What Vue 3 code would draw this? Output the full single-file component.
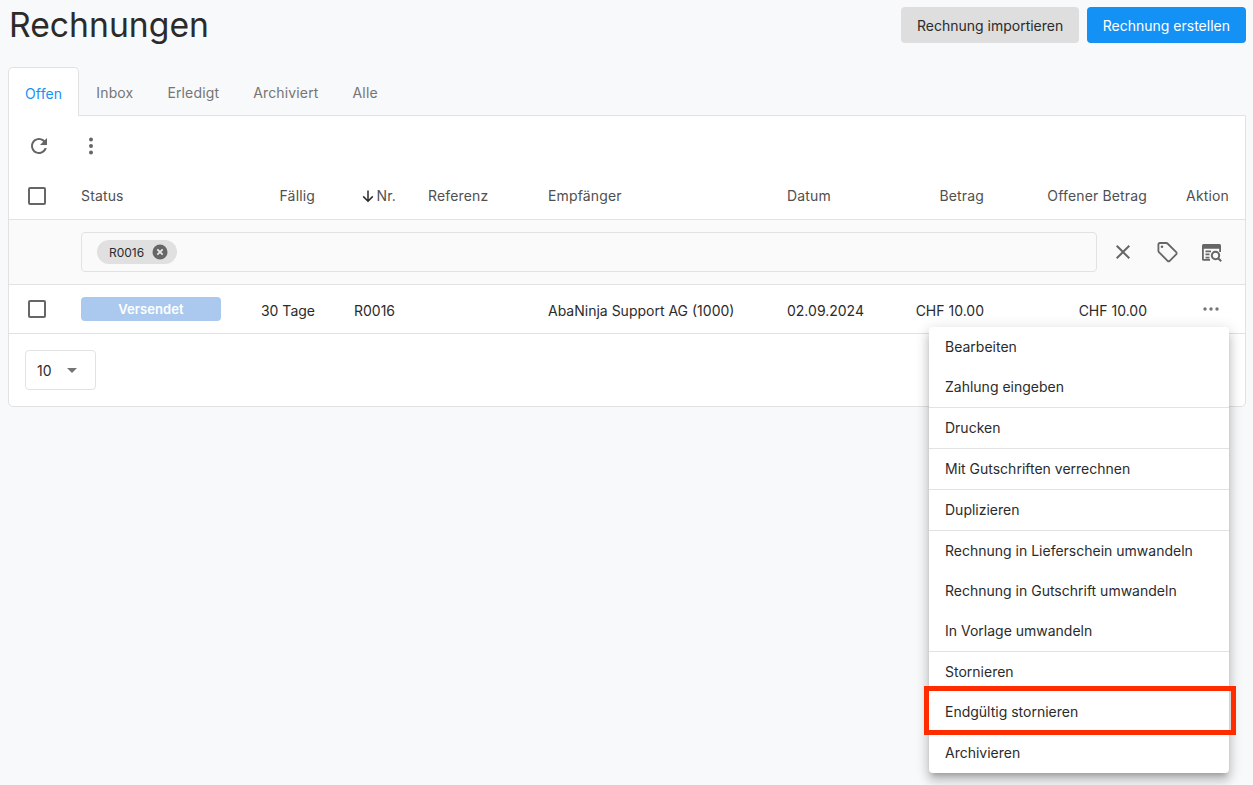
<script setup>
const tabs = ['Offen', 'Inbox', 'Erledigt', 'Archiviert', 'Alle']

const menuGroups = [
  ['Bearbeiten', 'Zahlung eingeben'],
  ['Drucken'],
  ['Mit Gutschriften verrechnen'],
  ['Duplizieren'],
  ['Rechnung in Lieferschein umwandeln', 'Rechnung in Gutschrift umwandeln', 'In Vorlage umwandeln'],
  ['Stornieren', 'Endgültig stornieren'],
  ['Archivieren'],
]
</script>

<template>
  <div class="page">
    <header class="page-head">
      <h1 class="page-title">Rechnungen</h1>
      <div class="head-actions">
        <button type="button" class="btn btn--grey">Rechnung importieren</button>
        <button type="button" class="btn btn--blue">Rechnung erstellen</button>
      </div>
    </header>

    <nav class="tabs">
      <a
        v-for="(tab, i) in tabs"
        :key="tab"
        class="tab"
        :class="{ 'tab--active': i === 0 }"
      >{{ tab }}</a>
    </nav>

    <section class="card">
      <div class="toolbar">
        <svg class="tool-icon" viewBox="0 0 24 24" width="24" height="24">
          <path d="M17.65 6.35C16.2 4.9 14.21 4 12 4c-4.42 0-7.99 3.58-7.99 8s3.57 8 7.99 8c3.73 0 6.84-2.55 7.73-6h-2.08c-.82 2.33-3.04 4-5.65 4-3.31 0-6-2.69-6-6s2.69-6 6-6c1.66 0 3.14.69 4.22 1.78L13 11h7V4l-2.35 2.35z" />
        </svg>
        <svg class="tool-icon" viewBox="0 0 24 24" width="24" height="24">
          <circle cx="12" cy="5.5" r="2" />
          <circle cx="12" cy="12" r="2" />
          <circle cx="12" cy="18.5" r="2" />
        </svg>
      </div>

      <div class="grid-row grid-row--head">
        <div class="cell"><span class="checkbox"></span></div>
        <div class="cell">Status</div>
        <div class="cell cell--right">Fällig</div>
        <div class="cell cell--sort">
          <svg viewBox="0 0 14 14" width="14" height="14" class="sort-arrow">
            <path d="M7 1.500v10.500M2.200 7.400 7 12.200l4.800-4.800" />
          </svg>
          <span>Nr.</span>
        </div>
        <div class="cell">Referenz</div>
        <div class="cell">Empfänger</div>
        <div class="cell">Datum</div>
        <div class="cell cell--right">Betrag</div>
        <div class="cell cell--right">Offener Betrag</div>
        <div class="cell cell--right">Aktion</div>
      </div>

      <div class="filter-row">
        <div class="filter-input">
          <span class="chip">
            R0016
            <svg viewBox="0 0 16 16" width="16" height="16" class="chip-x">
              <circle cx="8" cy="8" r="7.500" />
              <path d="M5.300 5.300l5.400 5.400M10.700 5.300l-5.400 5.400" />
            </svg>
          </span>
        </div>
        <div class="filter-icons">
          <svg class="tool-icon" viewBox="0 0 24 24" width="24" height="24">
            <path d="M19 6.410 17.590 5 12 10.590 6.410 5 5 6.410 10.590 12 5 17.590 6.410 19 12 13.410 17.590 19 19 17.590 13.410 12z" />
          </svg>
          <svg class="tool-icon" viewBox="0 0 24 24" width="24" height="24">
            <path class="tag-outline" d="M4.800 3h6.600c.4 0 .8.200 1.100.5l8.700 8.700c.6.600.6 1.500 0 2.100l-6.500 6.500c-.6.600-1.500.6-2.100 0L3.900 12.100c-.3-.3-.5-.7-.5-1.100V4.400C3.400 3.600 4 3 4.800 3z" />
            <circle cx="7" cy="6.800" r="1.300" />
          </svg>
          <svg class="tool-icon" viewBox="0 0 24 24" width="24" height="24">
            <path d="M4.500 4h16A1.500 1.500 0 0 1 22 5.500V12h-1.800V8.800H4.800V19H11v1.800H4.500A1.500 1.500 0 0 1 3 19.300V5.500A1.500 1.500 0 0 1 4.500 4z" />
            <path d="M6.500 10.500H12v1.700H6.500zM6.500 13.600h4v1.700h-4zM6.500 16.700h4v1.700h-4z" />
            <path class="lens" d="M16.500 11.800a3.700 3.700 0 1 0 0 7.400 3.700 3.700 0 0 0 0-7.400zM19.200 18.200l3 3" />
          </svg>
        </div>
      </div>

      <div class="grid-row grid-row--body">
        <div class="cell cell--box"><span class="checkbox"></span></div>
        <div class="cell cell--box"><span class="status">Versendet</span></div>
        <div class="cell cell--right">30 Tage</div>
        <div class="cell cell--nr">R0016</div>
        <div class="cell"></div>
        <div class="cell">AbaNinja Support AG (1000)</div>
        <div class="cell">02.09.2024</div>
        <div class="cell cell--right">CHF 10.00</div>
        <div class="cell cell--right">CHF 10.00</div>
        <div class="cell cell--right cell--box">
          <svg class="dots" viewBox="0 0 16 4" width="16" height="4">
            <circle cx="2" cy="2" r="1.700" />
            <circle cx="8" cy="2" r="1.700" />
            <circle cx="14" cy="2" r="1.700" />
          </svg>
        </div>
      </div>

      <div class="card-foot">
        <div class="page-size">
          <span>10</span>
          <span class="caret"></span>
        </div>
      </div>
    </section>

    <div class="menu">
      <div v-for="(group, g) in menuGroups" :key="g" class="menu-group">
        <div v-for="item in group" :key="item" class="menu-item">{{ item }}</div>
      </div>
    </div>
    <div class="highlight"></div>
  </div>
</template>

<style scoped>
.page {
  position: relative;
  box-sizing: border-box;
  height: 785px;
  padding: 7px 7px 0 8px;
  overflow: hidden;
  background: #f8f9fa;
  color: #2b2b2b;
  font-family: Inter, "Liberation Sans", sans-serif;
  font-size: 14px;
}

.page-head {
  display: flex;
  justify-content: space-between;
  align-items: flex-start;
  height: 60px;
}

.page-title {
  margin: 0;
  padding-left: 1px;
  font-size: 33.700px;
  font-weight: 400;
  line-height: 36px;
  color: #2b2b2b;
}

.head-actions {
  display: flex;
  gap: 8px;
}

.btn {
  height: 36px;
  padding: 0 16px;
  border: none;
  border-radius: 4px;
  font-family: inherit;
  font-size: 14px;
  cursor: pointer;
}

.btn--grey {
  padding: 0 15.500px;
  background: #dedede;
  color: #2b2b2b;
}

.btn--blue {
  background: #1391f5;
  color: #fff;
}

.tabs {
  display: flex;
  height: 48px;
  letter-spacing: 0.15px;
}

.tab {
  display: flex;
  align-items: center;
  box-sizing: border-box;
  height: 48px;
  padding: 3px 17px 0;
  color: #757575;
}

.tab--active {
  position: relative;
  z-index: 1;
  height: 49px;
  padding: 2px 16px 0;
  background: #fff;
  border: 1px solid #e2e2e2;
  border-bottom: none;
  border-radius: 5px 5px 0 0;
  color: #1391f5;
}

.card {
  box-sizing: border-box;
  height: 292px;
  background: #fff;
  border: 1px solid #e2e2e2;
  border-radius: 0 0 5px 5px;
}

.toolbar {
  display: flex;
  align-items: center;
  gap: 28px;
  height: 60px;
  padding-left: 18px;
}

.tool-icon {
  display: block;
  fill: #666;
}

.tag-outline {
  fill: none;
  stroke: #666;
  stroke-width: 1.800;
}

.lens {
  fill: none;
  stroke: #666;
  stroke-width: 2;
}

.grid-row {
  display: grid;
  grid-template-columns: 72px 140px 94px 113px 120px 239px 100px 97px 163px 82px;
  padding-right: 16px;
  align-items: center;
}

.grid-row--head {
  box-sizing: border-box;
  height: 44px;
  padding-bottom: 4px;
  border-bottom: 1px solid #e2e2e2;
  color: #505050;
  letter-spacing: 0.15px;
}

.grid-row--body {
  height: 48px;
  border-bottom: 1px solid #e2e2e2;
}

.grid-row--body .cell:not(.cell--box) {
  padding-top: 2px;
}

.cell {
  white-space: nowrap;
}

.cell--right {
  display: flex;
  justify-content: flex-end;
}

.cell--sort {
  display: flex;
  justify-content: flex-end;
  align-items: center;
  gap: 2px;
  padding-right: 32px;
}

.cell--nr {
  padding-left: 39px;
}

.sort-arrow {
  fill: none;
  stroke: #2b2b2b;
  stroke-width: 1.500;
}

.checkbox {
  display: block;
  box-sizing: border-box;
  width: 18px;
  height: 18px;
  margin-left: 19px;
  border: 2px solid #666;
  border-radius: 2px;
}

.filter-row {
  display: flex;
  align-items: center;
  height: 64px;
  padding-left: 72px;
  background: #fafafa;
  border-bottom: 1px solid #e2e2e2;
}

.filter-input {
  display: flex;
  align-items: center;
  box-sizing: border-box;
  width: 1016px;
  height: 40px;
  padding-left: 15px;
  background: #fafafa;
  border: 1px solid #e2e2e2;
  border-radius: 4px;
}

.chip {
  display: flex;
  align-items: center;
  justify-content: space-between;
  box-sizing: border-box;
  width: 80px;
  height: 24px;
  padding: 0 10px 0 12px;
  background: #e0e0e0;
  border-radius: 12px;
  font-size: 12px;
  color: #2b2b2b;
}

.chip-x {
  flex: none;
  margin-right: -1px;
}

.chip-x circle {
  fill: #666;
}

.chip-x path {
  fill: none;
  stroke: #e8e8e8;
  stroke-width: 1.800;
}

.filter-icons {
  display: flex;
  gap: 20px;
  margin-left: 14px;
}

.status {
  display: block;
  width: 140px;
  height: 24px;
  background: #abc9ee;
  border-radius: 4px;
  color: #fff;
  font-size: 13px;
  font-weight: 600;
  line-height: 24px;
  letter-spacing: 0.1px;
  text-align: center;
}

.dots {
  display: block;
  margin-right: 10px;
  fill: #757575;
}

.card-foot {
  padding: 16px;
}

.page-size {
  display: flex;
  align-items: center;
  justify-content: space-between;
  box-sizing: border-box;
  width: 71px;
  height: 40px;
  padding: 0 18px 0 11px;
  border: 1px solid #e2e2e2;
  border-radius: 4px;
}

.caret {
  width: 0;
  height: 0;
  border-left: 5px solid transparent;
  border-right: 5px solid transparent;
  border-top: 5px solid #757575;
}

.menu {
  position: absolute;
  left: 929px;
  top: 327px;
  width: 300px;
  background: #fff;
  border-radius: 4px;
  box-shadow:
    0 5px 5px -3px rgba(0, 0, 0, 0.2),
    0 8px 10px 1px rgba(0, 0, 0, 0.14),
    0 3px 14px 2px rgba(0, 0, 0, 0.12);
}

.menu-group + .menu-group {
  border-top: 1px solid #e2e2e2;
}

.menu-item {
  padding: 0 16px;
  line-height: 40px;
  white-space: nowrap;
}

.highlight {
  position: absolute;
  left: 924px;
  top: 686px;
  box-sizing: border-box;
  width: 312px;
  height: 49px;
  border: 5px solid #ff2c00;
  pointer-events: none;
}
</style>
